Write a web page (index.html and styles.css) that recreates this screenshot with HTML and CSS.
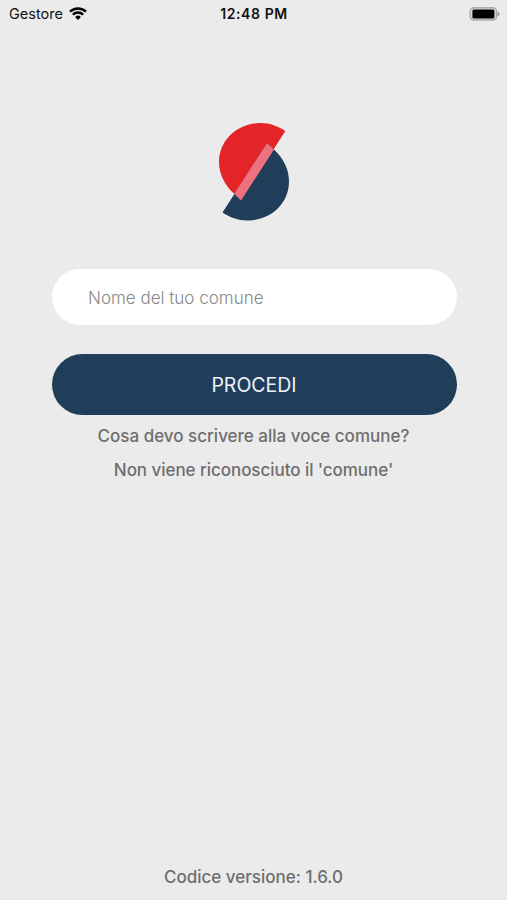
FILE: index.html
```html
<!DOCTYPE html>
<html lang="it">
<head>
  <meta charset="UTF-8">
  <meta name="viewport" content="width=device-width, initial-scale=1.0">
  <title>Accesso comune</title>
  <link rel="stylesheet" href="styles.css">
</head>
<body>

  <!-- Status bar -->
  <header class="status-bar">
    <div class="carrier">
      <span>Gestore</span>
      <svg class="wifi" viewBox="0 0 18 14" width="18" height="14">
        <path d="M1 4.7a11.5 11.5 0 0 1 16 0M3.9 7.7a7.3 7.3 0 0 1 10.2 0" fill="none" stroke="#000" stroke-width="2.5"/>
        <path d="M6.1 10a4.2 4.2 0 0 1 5.8 0L9 13z"/>
      </svg>
    </div>
    <span class="time">12:48 PM</span>
    <svg class="battery" viewBox="0 0 32 14" width="32" height="14">
      <rect x="1.2" y=".8" width="26.4" height="12.2" rx="3.8" fill="#d8d8d8" stroke="#aaa" stroke-width="1.4"/>
      <rect x="3.4" y="2.4" width="22" height="9" rx="1.5"/>
      <path d="M28.5 4.7q2.2 .8 2.2 2.3t-2.2 2.3z" fill="#999"/>
    </svg>
  </header>

  <!-- Main Section -->
  <main>
    <svg class="logo" viewBox="218 122 72 100" width="72" height="100">
      <path d="M285.3 131C278 126 269 122.7 259.5 123C236 123.5 219 141 219 162C219 174 224.5 185 234.2 193.8L241 200.5z" fill="#e52428"/>
      <path d="M222.5 212.4C230 217.4 239 220.7 248.5 220.4C272 219.9 289 202.4 289 181.4C289 169 283.5 158.5 274 149.5L267 143z" fill="#203e5a"/>
      <path d="M267 143L274 149.5L241 200.5L234.2 193.8z" fill="#ee727e"/>
    </svg>
    <form class="login-form">
      <input type="text" placeholder="Nome del tuo comune">
      <button type="button">PROCEDI</button>
    </form>
    <a class="help-link">Cosa devo scrivere alla voce comune?</a>
    <a class="help-link short">Non viene riconosciuto il 'comune'</a>
  </main>

  <footer>Codice versione: 1.6.0</footer>

</body>
</html>
```

FILE: styles.css
```css
/* Global Styles */
* {
  box-sizing: border-box;
}

body {
  font-family: Inter, sans-serif;
  background: #ebebeb;
  color: #6e6e6e;
  margin: 0;
  height: 900px;
  display: flex;
  flex-direction: column;
  overflow: hidden;
}

/* Status bar */
.status-bar {
  display: grid;
  grid-template-columns: 1fr auto 1fr;
  align-items: center;
  height: 27px;
  padding: 0 6px 0 9px;
  color: #111;
  font-size: 14.5px;
}

.carrier {
  display: flex;
  align-items: center;
  gap: 6px;
}

.time {
  margin-right: 2px;
  font-size: 14px;
  font-weight: 600;
  letter-spacing: 0.6px;
}

.battery {
  justify-self: end;
}

main {
  flex: 1;
  display: flex;
  flex-direction: column;
  align-items: center;
  padding-top: 95px;
}

.logo {
  display: block;
}

.login-form {
  width: 405px;
  margin-top: 47px;
  margin-left: 1px;
  margin-bottom: 4px;
}

input, button {
  display: block;
  width: 100%;
  border: none;
  font-family: inherit;
}

input {
  height: 56px;
  padding: 2px 36.5px 0;
  border-radius: 28px;
  background: #fff;
  font-size: 17px;
  font-weight: 300;
}

input::placeholder {
  color: #888;
}

button {
  height: 61px;
  margin-top: 29px;
  border-radius: 31px;
  background: #203e5a;
  color: #edf3f8;
  font-size: 19.5px;
}

.help-link {
  font-size: 17px;
  font-weight: 500;
  line-height: 34px;
}

.short {
  letter-spacing: -0.05px;
}

footer {
  height: 46px;
  line-height: 46px;
  text-align: center;
  font-size: 17px;
  font-weight: 500;
}
```
